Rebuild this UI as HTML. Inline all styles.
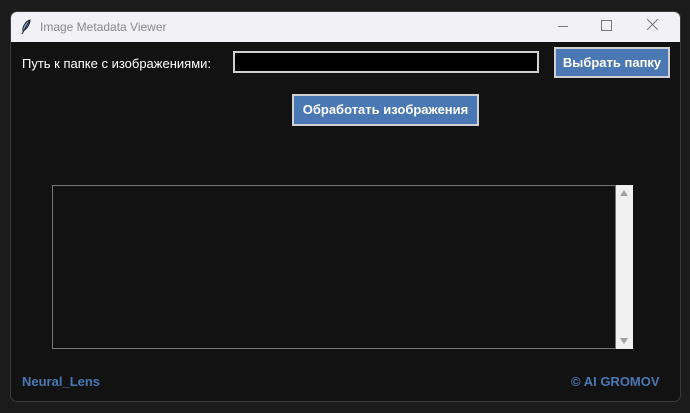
<!DOCTYPE html>
<html><head><meta charset="utf-8"><style>
body{margin:0;width:690px;height:413px;background:#1b1b1b;position:relative;overflow:hidden;font-family:"Liberation Sans",sans-serif;}
.win{position:absolute;left:10px;top:11px;width:669px;height:389px;background:#121212;border:1px solid #3a3a3a;border-radius:7px;overflow:hidden;}
.tb{position:absolute;left:0;top:0;width:100%;height:30px;background:#f2f2f6;}
.tb .t{position:absolute;left:29px;top:8px;font-size:12px;color:#8a8a8a;}
.a{position:absolute;}
.btn{position:absolute;background:#4a78b5;border:2px solid #d0d0d0;box-sizing:border-box;color:#fff;font-weight:bold;font-size:13px;text-align:center;}
</style></head><body>
<div class="win">
<div class="tb">
<svg class="a" style="left:9px;top:7px" width="12" height="16" viewBox="0 0 12 16"><path d="M2 15 L10 1 M3 12 C2 8 6 2 10 1 C10 5 7 10 3 12Z" stroke="#222" fill="#7aa7e0" stroke-width="1"/></svg>
<div class="t">Image Metadata Viewer</div>
<div class="a" style="left:547px;top:14px;width:10px;height:1px;background:#777"></div>
<div class="a" style="left:590px;top:8px;width:9px;height:9px;border:1px solid #777"></div>
<svg class="a" style="left:636px;top:7px" width="11" height="11"><path d="M0 0L11 11M11 0L0 11" stroke="#777"/></svg>
</div>
<div class="a" style="left:11px;top:44px;font-size:13px;color:#fff">Путь к папке с изображениями:</div>
<div class="a" style="left:222px;top:39px;width:306px;height:22px;box-sizing:border-box;background:#000;border:2px solid #d0d0d0"></div>
<div class="btn" style="left:543px;top:35px;width:116px;height:31px;line-height:27px">Выбрать папку</div>
<div class="btn" style="left:281px;top:82px;width:187px;height:32px;line-height:28px">Обработать изображения</div>
<div class="a" style="left:41px;top:173px;width:564px;height:164px;box-sizing:border-box;border:1px solid #777;background:#121212"></div>
<div class="a" style="left:605px;top:173px;width:17px;height:164px;background:#f0f0f0"></div>
<div class="a" style="left:609px;top:178px;border:4px solid transparent;border-bottom:6px solid #a0a0a0;border-top:0"></div>
<div class="a" style="left:609px;top:326px;border:4px solid transparent;border-top:6px solid #a0a0a0;border-bottom:0"></div>
<div class="a" style="left:11px;top:362px;font-size:13px;font-weight:bold;color:#4a78b5">Neural_Lens</div>
<div class="a" style="left:560px;top:362px;font-size:13px;font-weight:bold;color:#4a78b5">© AI GROMOV</div>
</div>
</body></html>
